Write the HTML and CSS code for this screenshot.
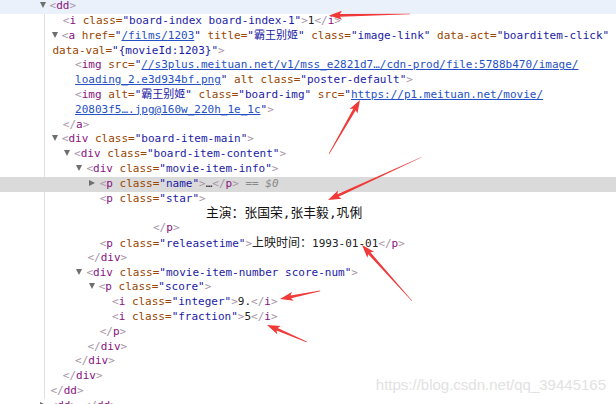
FILE: index.html
```html
<!DOCTYPE html>
<html lang="zh">
<head>
    <meta charset="UTF-8">
    <title>Elements</title>
    <link rel="stylesheet" href="styles.css">
</head>
<body>
    <div class="tree">
        <div class="ln d0 hover"><span class="tw open"></span><span class="b">&lt;</span><span class="t">dd</span><span class="b">&gt;</span></div>
        <div class="kids">
            <div class="ln d1"><span class="b">&lt;</span><span class="t">i</span> <span class="a">class=</span><span class="v">"board-index board-index-1"</span><span class="b">&gt;</span>1<span class="b">&lt;/</span><span class="t">i</span><span class="b">&gt;</span></div>
            <div class="ln d1"><span class="tw open"></span><span class="b">&lt;</span><span class="t">a</span> <span class="a">href=</span><span class="v">"<span class="lk">/films/1203</span>"</span> <span class="a">title=</span><span class="v">"<span class="zh-v">霸王别姬</span>"</span> <span class="a">class=</span><span class="v">"image-link"</span> <span class="a">data-act=</span><span class="v">"boarditem-click"</span></div>
            <div class="ln wrap"><span class="a">data-val=</span><span class="v">"{movieId:1203}"</span><span class="b">&gt;</span></div>
            <div class="ln d2"><span class="b">&lt;</span><span class="t">img</span> <span class="a">src=</span><span class="v">"<span class="lk">//s3plus.meituan.net/v1/mss_e2821d7…/cdn-prod/file:5788b470/image/</span></span></div>
            <div class="ln d2"><span class="v"><span class="lk">loading_2.e3d934bf.png</span>"</span> <span class="a">alt</span> <span class="a">class=</span><span class="v">"poster-default"</span><span class="b">&gt;</span></div>
            <div class="ln d2"><span class="b">&lt;</span><span class="t">img</span> <span class="a">alt=</span><span class="v">"<span class="zh-v">霸王别姬</span>"</span> <span class="a">class=</span><span class="v">"board-img"</span> <span class="a">src=</span><span class="v">"<span class="lk">https://p1.meituan.net/movie/</span></span></div>
            <div class="ln d2"><span class="v"><span class="lk">20803f5….jpg@160w_220h_1e_1c</span>"</span><span class="b">&gt;</span></div>
            <div class="ln d1"><span class="b">&lt;/</span><span class="t">a</span><span class="b">&gt;</span></div>
            <div class="ln d1"><span class="tw open"></span><span class="b">&lt;</span><span class="t">div</span> <span class="a">class=</span><span class="v">"board-item-main"</span><span class="b">&gt;</span></div>
            <div class="ln d2"><span class="tw open"></span><span class="b">&lt;</span><span class="t">div</span> <span class="a">class=</span><span class="v">"board-item-content"</span><span class="b">&gt;</span></div>
            <div class="ln d3"><span class="tw open"></span><span class="b">&lt;</span><span class="t">div</span> <span class="a">class=</span><span class="v">"movie-item-info"</span><span class="b">&gt;</span></div>
            <div class="ln d4 selected"><span class="tw shut"></span><span class="b">&lt;</span><span class="t">p</span> <span class="a">class=</span><span class="v">"name"</span><span class="b">&gt;</span>…<span class="b">&lt;/</span><span class="t">p</span><span class="b">&gt;</span> <span class="dollar">== $0</span></div>
            <div class="ln d4"><span class="b">&lt;</span><span class="t">p</span> <span class="a">class=</span><span class="v">"star"</span><span class="b">&gt;</span></div>
            <div class="ln star-text">主演：张国荣,张丰毅,巩俐</div>
            <div class="ln p-close"><span class="b">&lt;/</span><span class="t">p</span><span class="b">&gt;</span></div>
            <div class="ln d4"><span class="b">&lt;</span><span class="t">p</span> <span class="a">class=</span><span class="v">"releasetime"</span><span class="b">&gt;</span><span class="zh">上映时间：</span>1993-01-01<span class="b">&lt;/</span><span class="t">p</span><span class="b">&gt;</span></div>
            <div class="ln d3"><span class="b">&lt;/</span><span class="t">div</span><span class="b">&gt;</span></div>
            <div class="ln d3"><span class="tw open"></span><span class="b">&lt;</span><span class="t">div</span> <span class="a">class=</span><span class="v">"movie-item-number score-num"</span><span class="b">&gt;</span></div>
            <div class="ln d4"><span class="tw open"></span><span class="b">&lt;</span><span class="t">p</span> <span class="a">class=</span><span class="v">"score"</span><span class="b">&gt;</span></div>
            <div class="ln d5"><span class="b">&lt;</span><span class="t">i</span> <span class="a">class=</span><span class="v">"integer"</span><span class="b">&gt;</span>9.<span class="b">&lt;/</span><span class="t">i</span><span class="b">&gt;</span></div>
            <div class="ln d5"><span class="b">&lt;</span><span class="t">i</span> <span class="a">class=</span><span class="v">"fraction"</span><span class="b">&gt;</span>5<span class="b">&lt;/</span><span class="t">i</span><span class="b">&gt;</span></div>
            <div class="ln d4"><span class="b">&lt;/</span><span class="t">p</span><span class="b">&gt;</span></div>
            <div class="ln d3"><span class="b">&lt;/</span><span class="t">div</span><span class="b">&gt;</span></div>
            <div class="ln d2"><span class="b">&lt;/</span><span class="t">div</span><span class="b">&gt;</span></div>
            <div class="ln d1"><span class="b">&lt;/</span><span class="t">div</span><span class="b">&gt;</span></div>
            <div class="ln d0"><span class="b">&lt;/</span><span class="t">dd</span><span class="b">&gt;</span></div>
        </div>
        <div class="ln d0"><span class="tw shut"></span><span class="b">&lt;</span><span class="t">dd</span><span class="b">&gt;</span>…<span class="b">&lt;/</span><span class="t">dd</span><span class="b">&gt;</span></div>
    </div>

    <!-- red annotation arrows drawn over the screenshot -->
    <svg class="marks" width="616" height="404" viewBox="0 0 616 404">
        <g fill="#f03a3a">
            <polygon transform="translate(329 15.5) rotate(-1.1)" points="0,0 13,-4.5 11,-1.4 81,-0.3 81,0.3 11,1.4 13,4.5"/>
            <polygon transform="translate(360 100) rotate(119.9)" points="0,0 13,-4.5 11,-1.4 62,-0.3 62,0.3 11,1.4 13,4.5"/>
            <polygon transform="translate(328 200) rotate(-24.6)" points="0,0 13,-4.5 11,-1.4 103,-0.2 103,0.2 11,1.4 13,4.5"/>
            <polygon transform="translate(362 245) rotate(48.2)" points="0,0 13,-4.5 11,-1.4 75,-0.3 75,0.3 11,1.4 13,4.5"/>
            <polygon transform="translate(280 299) rotate(-11.3)" points="0,0 13,-4.5 11,-1.4 41,-0.4 41,0.4 11,1.4 13,4.5"/>
            <polygon transform="translate(267 325) rotate(23)" points="0,0 13,-4.5 11,-1.4 43,-0.4 43,0.4 11,1.4 13,4.5"/>
        </g>
    </svg>
    <div class="watermark">https://blog.csdn.net/qq_39445165</div>
</body>
</html>
```

FILE: styles.css
```css
body {
    margin: 0;
    width: 616px;
    height: 404px;
    overflow: hidden;
    position: relative;
    background-color: #fff;
}
.tree {
    margin-top: -0.8px;
    font-family: "DejaVu Sans Mono", "Noto Sans CJK SC", monospace;
    font-size: 11px;
    line-height: 14.8px;
    color: #222;
}
.kids {
    background: linear-gradient(#e0e0e0, #e0e0e0) 44px 0 / 1px 100% no-repeat;
}
.ln {
    height: 14.8px;
    white-space: nowrap;
}
.hover {
    background-color: #ebf1fb;
}
.selected {
    background-color: #dadada;
}
.d0 { padding-left: 50.5px; }
.d1 { padding-left: 62.8px; }
.d2 { padding-left: 75.1px; }
.d3 { padding-left: 87.4px; }
.d4 { padding-left: 99.7px; }
.d5 { padding-left: 112px; }
.wrap { padding-left: 52.5px; }
.star-text {
    padding-left: 206px;
    font-size: 12.8px;
    color: #111;
}
.p-close { padding-left: 153px; }

.tw {
    display: inline-block;
    width: 0;
    height: 0;
    border-style: solid;
    margin-left: -11px;
    vertical-align: 1px;
}
.tw.open {
    border-width: 6px 3.5px 0 3.5px;
    border-color: #6e6e6e transparent transparent transparent;
    margin-right: 4px;
}
.tw.shut {
    border-width: 3.5px 0 3.5px 6px;
    border-color: transparent transparent transparent #6e6e6e;
    margin-right: 5px;
}

.b { color: #a894a6; }
.t { color: #881280; }
.a { color: #994500; }
.v { color: #1a1aa6; }
.lk {
    color: #2551c4;
    text-decoration: underline;
}
.zh { font-size: 12px; }
.zh-v { font-size: 11px; }
.dollar {
    color: #888;
    font-style: italic;
}

.marks {
    position: absolute;
    left: 0;
    top: 0;
}
.watermark {
    position: absolute;
    right: 10px;
    top: 376px;
    font-family: "Liberation Sans", Arial, sans-serif;
    font-size: 15px;
    color: #e2e2e2;
}
```
